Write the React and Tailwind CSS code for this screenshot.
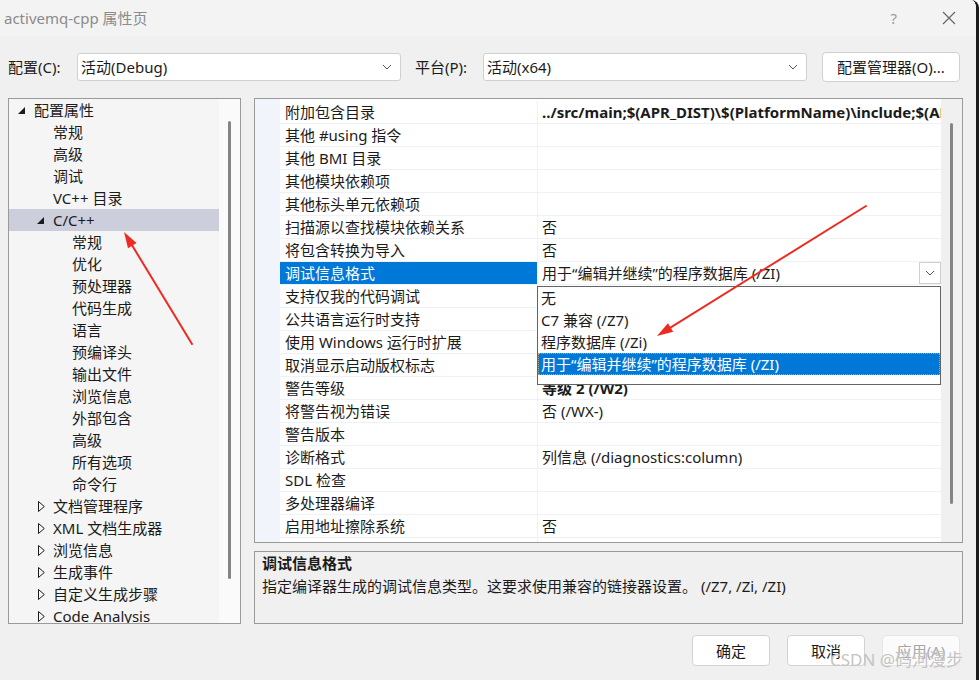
import React from "react";

const tree = [
  { label: "配置属性", level: 0, kind: "open" },
  { label: "常规", level: 1 },
  { label: "高级", level: 1 },
  { label: "调试", level: 1 },
  { label: "VC++ 目录", level: 1 },
  { label: "C/C++", level: 1, kind: "open", selected: true },
  { label: "常规", level: 2 },
  { label: "优化", level: 2 },
  { label: "预处理器", level: 2 },
  { label: "代码生成", level: 2 },
  { label: "语言", level: 2 },
  { label: "预编译头", level: 2 },
  { label: "输出文件", level: 2 },
  { label: "浏览信息", level: 2 },
  { label: "外部包含", level: 2 },
  { label: "高级", level: 2 },
  { label: "所有选项", level: 2 },
  { label: "命令行", level: 2 },
  { label: "文档管理程序", level: 1, kind: "closed" },
  { label: "XML 文档生成器", level: 1, kind: "closed" },
  { label: "浏览信息", level: 1, kind: "closed" },
  { label: "生成事件", level: 1, kind: "closed" },
  { label: "自定义生成步骤", level: 1, kind: "closed" },
  { label: "Code Analysis", level: 1, kind: "closed" },
];

const rows = [
  { name: "附加包含目录", value: "../src/main;$(APR_DIST)\\$(PlatformName)\\include;$(APR_DIST)", bold: true },
  { name: "其他 #using 指令" },
  { name: "其他 BMI 目录" },
  { name: "其他模块依赖项" },
  { name: "其他标头单元依赖项" },
  { name: "扫描源以查找模块依赖关系", value: "否" },
  { name: "将包含转换为导入", value: "否" },
  { name: "调试信息格式", value: "用于“编辑并继续”的程序数据库 (/ZI)", selected: true },
  { name: "支持仅我的代码调试" },
  { name: "公共语言运行时支持" },
  { name: "使用 Windows 运行时扩展" },
  { name: "取消显示启动版权标志" },
  { name: "警告等级", value: "等级 2 (/W2)", bold: true },
  { name: "将警告视为错误", value: "否 (/WX-)" },
  { name: "警告版本" },
  { name: "诊断格式", value: "列信息 (/diagnostics:column)" },
  { name: "SDL 检查" },
  { name: "多处理器编译" },
  { name: "启用地址擦除系统", value: "否" },
  { name: "启用模糊支持(实验性)", value: "否" },
];

const options = ["无", "C7 兼容 (/Z7)", "程序数据库 (/Zi)", "用于“编辑并继续”的程序数据库 (/ZI)"];

function Chevron() {
  return (
    <svg width="10" height="6" viewBox="0 0 10 6" fill="none">
      <path d="M1 1l4 4 4-4" stroke="#555" strokeWidth="1" />
    </svg>
  );
}

function Select({ value }) {
  return (
    <div className="w-[324px] h-[28px] bg-white border border-[#d0d0d0] rounded-[3px] flex items-center justify-between pl-[3px] pr-[8px]">
      <span>{value}</span>
      <Chevron />
    </div>
  );
}

function Toggle({ kind }) {
  if (kind === "open")
    return (
      <svg width="7" height="7" viewBox="0 0 7 7">
        <polygon points="7,0 7,7 0,7" fill="#1b1b1b" />
      </svg>
    );
  if (kind === "closed")
    return (
      <svg width="7" height="11" viewBox="0 0 7 11" className="ml-[1px]">
        <polygon points="0.5,0.5 6.3,5.5 0.5,10.5" fill="none" stroke="#1b1b1b" strokeWidth="1" />
      </svg>
    );
  return null;
}

function arrowHead(x1, y1, x2, y2, len = 16, half = 5) {
  const dx = x2 - x1;
  const dy = y2 - y1;
  const d = Math.hypot(dx, dy);
  const ux = dx / d;
  const uy = dy / d;
  const bx = x2 - ux * len;
  const by = y2 - uy * len;
  return `${x2},${y2} ${bx - uy * half},${by + ux * half} ${bx + uy * half},${by - ux * half}`;
}

function Arrow({ x1, y1, x2, y2 }) {
  const dx = x2 - x1;
  const dy = y2 - y1;
  const d = Math.hypot(dx, dy);
  const ex = x2 - (dx / d) * 12;
  const ey = y2 - (dy / d) * 12;
  return (
    <g>
      <line x1={x1} y1={y1} x2={ex} y2={ey} stroke="#ee2b22" strokeWidth="2" strokeLinecap="round" />
      <polygon points={arrowHead(x1, y1, x2, y2)} fill="#ee2b22" />
    </g>
  );
}

export default function App() {
  return (
    <div className="relative w-[979px] h-[680px] overflow-hidden bg-[#f0f0f0] border-r-[3px] border-[#1c1c1c] rounded-tr-[8px] text-[15px] leading-[20px] text-[#1b1b1b] font-['Noto_Sans','Noto_Sans_CJK_SC',sans-serif]">
      {/* title bar */}
      <div className="h-[36px] bg-[#f3f3f3] flex items-center pl-[4px] pr-[20px]">
        <span className="text-[15px] text-[#8b8b8b]">activemq-cpp 属性页</span>
        <span className="ml-auto text-[15px] text-[#9a9a9a]">?</span>
        <svg width="14" height="14" viewBox="0 0 14 14" className="ml-[45px]">
          <path d="M1 1l12 12M13 1L1 13" stroke="#666" strokeWidth="1.2" />
        </svg>
      </div>

      {/* config row */}
      <div className="mt-[16px] h-[30px] flex items-center pl-[8px]">
        <span className="w-[69px]">配置(C):</span>
        <Select value="活动(Debug)" />
        <span className="ml-[14px] w-[68px]">平台(P):</span>
        <Select value="活动(x64)" />
        <div className="ml-[15px] w-[138px] h-[30px] bg-white border border-[#d0d0d0] rounded-[4px] flex items-center justify-center">
          配置管理器(O)...
        </div>
      </div>

      {/* main */}
      <div className="mt-[16px] flex pl-[8px]">
        {/* tree */}
        <div className="w-[233px] h-[526px] border border-[#9a9a9a] bg-[#f5f5f5] flex overflow-hidden">
          <div className="w-[210px]">
            {tree.map((t, i) => (
              <div
                key={i}
                className={`h-[22px] flex items-center whitespace-nowrap ${t.selected ? "bg-[#cccedb]" : ""}`}
                style={{ paddingLeft: 9 + t.level * 19 }}
              >
                <div className="w-[16px] flex items-center">
                  <Toggle kind={t.kind} />
                </div>
                <span>{t.label}</span>
              </div>
            ))}
          </div>
          <div className="flex-1 bg-[#fafafa] flex justify-center pt-[22px]">
            <div className="w-[3px] h-[458px] bg-[#858585] rounded-full" />
          </div>
        </div>

        {/* right side */}
        <div className="ml-[13px] w-[709px] flex flex-col">
          <div className="relative h-[445px] border border-[#9a9a9a] bg-white flex overflow-hidden">
            <div className="w-[25px] bg-[#f1f5fb]" />
            <div className="w-[661px] pt-[2px]">
              {rows.map((r, i) => (
                <div key={i} className="h-[23px] flex border-b border-[#eef1f6]">
                  <div
                    className={`w-[257px] flex items-center pl-[5px] whitespace-nowrap ${r.selected ? "bg-[#0078d7] text-white" : ""}`}
                  >
                    {r.name}
                  </div>
                  <div className="w-[1px] bg-[#eef1f6]" />
                  <div className="flex-1 flex items-center pl-[4px] overflow-hidden whitespace-nowrap relative">
                    <span className={r.bold ? "font-bold" : ""}>{r.value}</span>
                    {r.selected && (
                      <div className="absolute right-0 top-0 w-[22px] h-[22px] border border-[#cfcfcf] bg-white flex items-center justify-center">
                        <Chevron />
                      </div>
                    )}
                  </div>
                </div>
              ))}
            </div>
            <div className="flex-1 bg-[#f0f0f0] flex justify-center pt-[24px]">
              <div className="w-[3px] h-[381px] bg-[#858585] rounded-full" />
            </div>

            {/* dropdown list */}
            <div className="absolute left-[282px] top-[187px] w-[404px] h-[99px] bg-white border border-[#646464]">
              {options.map((o, i) =>
                i === options.length - 1 ? (
                  <div
                    key={i}
                    className="h-[22px] flex items-center pl-[2px] bg-[#0078d7] text-white border border-dotted border-[#f29a2e] whitespace-nowrap"
                  >
                    {o}
                  </div>
                ) : (
                  <div key={i} className="h-[22px] flex items-center pl-[3px] whitespace-nowrap">
                    {o}
                  </div>
                )
              )}
            </div>
          </div>

          <div className="mt-[8px] h-[73px] border border-[#9a9a9a] bg-[#f0f0f0] px-[7px]">
            <div className="font-bold h-[22px] flex items-center">调试信息格式</div>
            <div className="h-[24px] flex items-center whitespace-nowrap">
              指定编译器生成的调试信息类型。这要求使用兼容的链接器设置。 (/Z7, /Zi, /ZI)
            </div>
          </div>
        </div>
      </div>

      {/* buttons */}
      <div className="mt-[11px] flex justify-end gap-[17px] pr-[16px]">
        <div className="w-[78px] h-[31px] bg-white border border-[#d3d3d3] rounded-[4px] flex items-center justify-center">
          确定
        </div>
        <div className="w-[78px] h-[31px] bg-white border border-[#d3d3d3] rounded-[4px] flex items-center justify-center">
          取消
        </div>
        <div className="w-[78px] h-[31px] bg-[#fbfbfb] border border-[#e5e5e5] rounded-[4px] flex items-center justify-center text-[#a8a8a8]">
          应用(A)
        </div>
      </div>

      {/* watermark */}
      <div className="absolute left-[830px] top-[650px] text-[17px] text-[#c4c4c4] whitespace-nowrap">
        CSDN @码河漫步
      </div>

      {/* annotation arrows */}
      <svg className="absolute inset-0 pointer-events-none" width="979" height="680">
        <Arrow x1={192} y1={344} x2={124} y2={232} />
        <Arrow x1={866} y1={206} x2={657} y2={336} />
      </svg>
    </div>
  );
}
